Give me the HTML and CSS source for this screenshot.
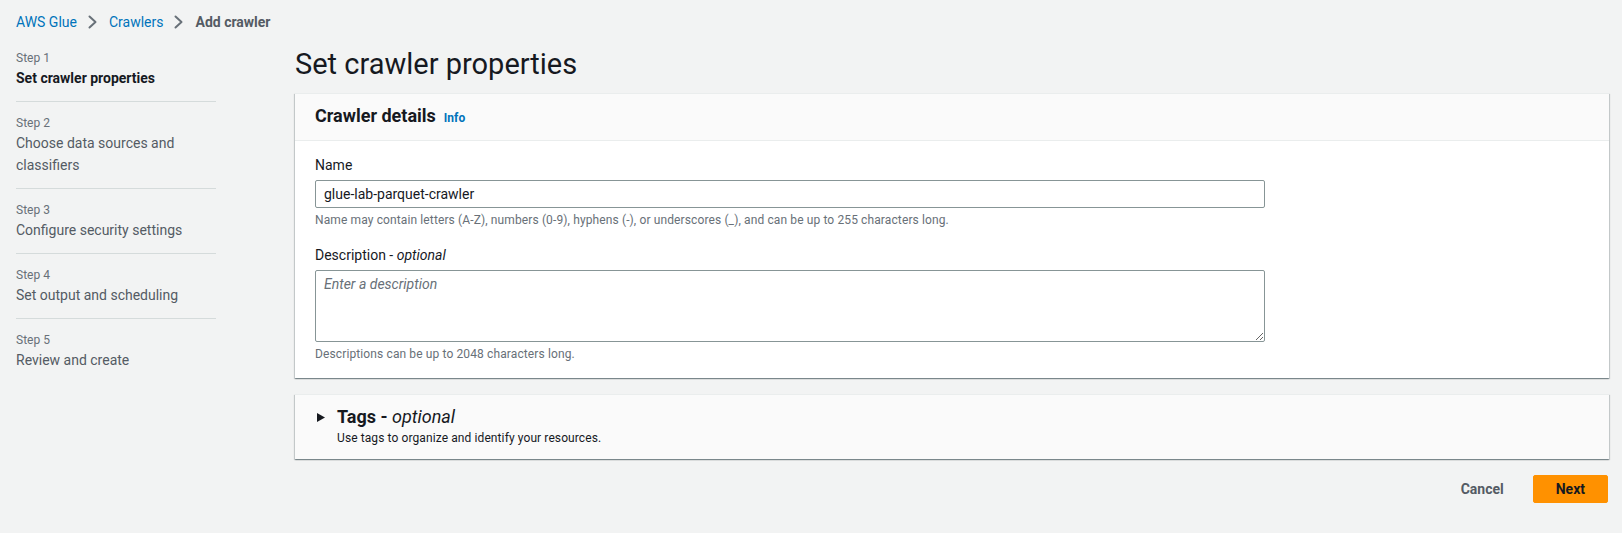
FILE: index.html
```html
<!DOCTYPE html>
<html lang="en">
<head>
<meta charset="utf-8">
<title>Add crawler</title>
<link rel="stylesheet" href="styles.css">
</head>
<body>
<nav class="breadcrumbs">
  <a class="crumb-link" href="#">AWS Glue</a>
  <svg class="chev" width="16" height="16" viewBox="0 0 16 16"><polyline points="4.5,2.5 10.5,8 4.5,13.5" fill="none" stroke="#687078" stroke-width="2" stroke-linejoin="round" stroke-linecap="round"/></svg>
  <a class="crumb-link" href="#">Crawlers</a>
  <svg class="chev" width="16" height="16" viewBox="0 0 16 16"><polyline points="4.5,2.5 10.5,8 4.5,13.5" fill="none" stroke="#687078" stroke-width="2" stroke-linejoin="round" stroke-linecap="round"/></svg>
  <span class="crumb-current">Add crawler</span>
</nav>

<div class="layout">
  <ul class="steps">
    <li class="step">
      <div class="step-label">Step 1</div>
      <div class="step-title active">Set crawler properties</div>
    </li>
    <li class="step">
      <div class="step-label">Step 2</div>
      <div class="step-title">Choose data sources and classifiers</div>
    </li>
    <li class="step">
      <div class="step-label">Step 3</div>
      <div class="step-title">Configure security settings</div>
    </li>
    <li class="step">
      <div class="step-label">Step 4</div>
      <div class="step-title">Set output and scheduling</div>
    </li>
    <li class="step">
      <div class="step-label">Step 5</div>
      <div class="step-title">Review and create</div>
    </li>
  </ul>

  <main class="content">
    <h1 class="page-title">Set crawler properties</h1>

    <section class="card">
      <header class="card-header">
        <h2 class="card-title">Crawler details</h2>
        <a class="info" href="#">Info</a>
      </header>
      <div class="card-body">
        <div class="field">
          <label class="field-label" for="name">Name</label>
          <input class="text-input" id="name" type="text" value="glue-lab-parquet-crawler">
          <div class="hint">Name may contain letters (A-Z), numbers (0-9), hyphens (-), or underscores (_), and can be up to 255 characters long.</div>
        </div>
        <div class="field">
          <label class="field-label" for="desc">Description - <i>optional</i></label>
          <textarea class="text-area" id="desc" placeholder="Enter a description"></textarea>
          <div class="hint">Descriptions can be up to 2048 characters long.</div>
        </div>
      </div>
    </section>

    <section class="card collapsed">
      <div class="expander">
        <svg class="caret" width="8" height="9" viewBox="0 0 8 9"><polygon points="0,0 8,4.5 0,9" fill="#16191f"/></svg>
        <div>
          <h2 class="card-title">Tags - <i class="opt">optional</i></h2>
          <div class="expander-desc">Use tags to organize and identify your resources.</div>
        </div>
      </div>
    </section>

    <div class="actions">
      <button class="btn btn-link" type="button">Cancel</button>
      <button class="btn btn-primary" type="button">Next</button>
    </div>
  </main>
</div>
</body>
</html>
```

FILE: styles.css
```css
* {
  box-sizing: border-box;
}

body {
  margin: 0;
  background: #f2f3f3;
  font-family: Roboto, "Liberation Sans", Arial, sans-serif;
  font-size: 14px;
  line-height: 22px;
  color: #16191f;
}

.breadcrumbs {
  display: flex;
  align-items: center;
  padding: 11px 16px 0;
  height: 33px;
}

.crumb-link {
  color: #0073bb;
  text-decoration: none;
}

.chev {
  margin: 0 8px;
  display: block;
}

.crumb-current {
  color: #545b64;
  font-weight: 700;
}

.layout {
  display: grid;
  grid-template-columns: 200px 1fr;
  column-gap: 79px;
  padding: 13px 13px 0 16px;
}

.steps {
  list-style: none;
  margin: 0;
  padding: 4px 0 0;
}

.step {
  padding: 13px 0 12px;
  border-bottom: 1px solid #d5dbdb;
}

.step:first-child {
  padding-top: 0;
}

.step:last-child {
  border-bottom: none;
}

.step-label {
  font-size: 12px;
  line-height: 16px;
  color: #687078;
}

.step-title {
  margin-top: 1px;
  color: #545b64;
}

.step-title.active {
  color: #16191f;
  font-weight: 700;
}

.content {
  min-width: 0;
}

.page-title {
  margin: 0 0 11px;
  font-size: 29px;
  line-height: 36px;
  font-weight: 400;
  color: #16191f;
}

.card {
  background: #ffffff;
  box-shadow: 0 1px 1px 0 rgba(0, 28, 36, 0.3), 1px 1px 1px 0 rgba(0, 28, 36, 0.15), -1px 1px 1px 0 rgba(0, 28, 36, 0.15);
  border-top: 1px solid #eaeded;
  margin-bottom: 16px;
}

.card-header {
  display: flex;
  align-items: baseline;
  background: #fafafa;
  border-bottom: 1px solid #eaeded;
  padding: 11px 20px 13px;
}

.card-title {
  margin: 0;
  font-size: 18px;
  line-height: 22px;
  font-weight: 700;
  color: #16191f;
}

.info {
  margin-left: 8px;
  font-size: 12px;
  line-height: 14px;
  font-weight: 700;
  color: #0073bb;
  text-decoration: none;
}

.card-body {
  padding: 13px 20px 16px;
}

.field + .field {
  margin-top: 16px;
}

.field-label {
  display: block;
  margin-bottom: 4px;
  color: #16191f;
}

.text-input,
.text-area {
  display: block;
  width: 100%;
  max-width: 950px;
  font-family: inherit;
  font-size: 14px;
  line-height: 22px;
  color: #16191f;
  border: 1px solid #879596;
  border-radius: 2px;
  background: #ffffff;
  padding: 2px 8px;
  margin: 0;
}

.text-input {
  height: 28px;
}

.text-area {
  height: 72px;
}

.text-area::placeholder {
  color: #687078;
  font-style: italic;
}

.hint {
  margin-top: 4px;
  font-size: 12px;
  line-height: 16px;
  letter-spacing: 0.12px;
  color: #687078;
}

.collapsed {
  background: #fafafa;
}

.expander {
  display: flex;
  align-items: flex-start;
  padding: 11px 20px 13px 22px;
}

.caret {
  display: block;
  margin-top: 7px;
  margin-right: 12px;
}

.opt {
  font-weight: 400;
}

.expander-desc {
  margin-top: 2px;
  font-size: 12px;
  line-height: 16px;
  letter-spacing: 0.1px;
  color: #16191f;
}

.actions {
  display: flex;
  justify-content: flex-end;
  gap: 6px;
  padding-right: 1px;
}

.btn {
  font-family: inherit;
  font-size: 14px;
  line-height: 22px;
  font-weight: 700;
  padding: 2px 22px;
  border: 1px solid transparent;
  border-radius: 2px;
  cursor: pointer;
}

.btn-link {
  background: transparent;
  color: #545b64;
}

.btn-primary {
  background: #ff9100;
  border-color: #ff9100;
  color: #16191f;
}
```
